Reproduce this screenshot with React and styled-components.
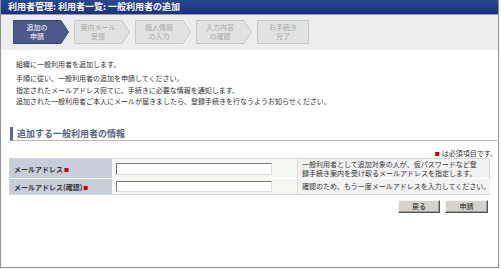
import React from "react";
import styled, { createGlobalStyle } from "styled-components";

const GlobalStyle = createGlobalStyle`
  body {
    margin: 0;
    background: #fff;
    font-family: "Noto Sans CJK JP", "Noto Sans", sans-serif;
  }
`;

const Frame = styled.div`
  width: 499px;
  height: 268px;
  box-sizing: border-box;
  border: 1px solid #8f8f8f;
  border-top: none;
  background: #fff;
  overflow: hidden;
`;

const TitleBar = styled.div`
  height: 14px;
  background: linear-gradient(#2a4794, #1b3479);
  border-bottom: 1px solid #8d9cc4;
  color: #fff;
  font-size: 9px;
  font-weight: bold;
  line-height: 14px;
  padding-left: 7px;
  white-space: nowrap;
`;

const StepBar = styled.div`
  height: 35px;
  box-sizing: border-box;
  background: #ededed;
  padding: 5px 0 0 12px;
  display: flex;
  gap: 5px;
`;

const StepBox = styled.div`
  position: relative;
  width: ${(p) => (p.last ? 52 : 56)}px;
  height: 24px;
  display: flex;
  align-items: center;
  justify-content: center;
  padding-right: ${(p) => (p.last ? 0 : 8)}px;
  box-sizing: border-box;
  color: ${(p) => (p.active ? "#fff" : "#a9a9a9")};
  font-size: 7px;
  line-height: 9px;
  text-align: center;
  svg {
    position: absolute;
    inset: 0;
  }
  span {
    position: relative;
  }
`;

const Content = styled.div`
  padding: 0 1px 0 8px;
`;

const Intro = styled.div`
  margin: 9px 0 0 7px;
  font-size: 7px;
  line-height: 11.5px;
  color: #333;
  white-space: nowrap;
`;

const Para = styled.div`
  margin-top: ${(p) => p.gap || 0}px;
`;

const Heading = styled.div`
  margin: 19.5px 0 0 1px;
  height: 13px;
  border-left: 3px solid #5d6b8e;
  border-bottom: 1px solid #b9b9b9;
  padding-left: 4px;
  font-size: 9px;
  font-weight: bold;
  line-height: 13px;
  color: #56637f;
`;

const Note = styled.div`
  margin-top: 7px;
  text-align: right;
  font-size: 7px;
  line-height: 10px;
  color: #333;
`;

const Dot = styled.span`
  color: #d40000;
  font-size: 5px;
  vertical-align: 1px;
  margin: 0 2px 0 1px;
`;

const Table = styled.div`
  width: 481px;
  box-sizing: border-box;
  border: 1px solid #d6d6d6;
`;

const Row = styled.div`
  display: grid;
  grid-template-columns: 102px 186px 1fr;
  height: ${(p) => p.h}px;
  border-bottom: ${(p) => (p.divider ? "1px solid #fff" : "none")};
`;

const Label = styled.div`
  background: #c8ced9;
  display: flex;
  align-items: center;
  padding-left: 4px;
  font-size: 7px;
  font-weight: bold;
  color: #333;
  white-space: nowrap;
`;

const InputCell = styled.div`
  background: #f6f6f4;
  border-left: 1px solid #fff;
  border-right: 1px solid #dcdcdc;
  display: flex;
  align-items: center;
  padding-left: 3px;
`;

const Field = styled.input`
  width: 156px;
  height: ${(p) => p.h}px;
  box-sizing: border-box;
  border: 1px solid;
  border-color: #7a7a7a #dcdcdc #dcdcdc #7a7a7a;
  background: #fff;
  padding: 0;
  outline: none;
`;

const Desc = styled.div`
  background: #f2f2f2;
  display: flex;
  align-items: center;
  padding-left: 4px;
  font-size: 7px;
  line-height: 8.5px;
  color: #333;
  white-space: nowrap;
`;

const Actions = styled.div`
  display: flex;
  justify-content: flex-end;
  gap: 5px;
  margin: 5px 9px 0 0;
`;

const Button = styled.button`
  width: ${(p) => p.w}px;
  height: 13px;
  box-sizing: border-box;
  padding: 0;
  background: #d6d3ce;
  border: 1px solid;
  border-color: #f4f4f4 #555 #555 #f4f4f4;
  box-shadow: inset -1px -1px 0 #9a9a9a;
  font-family: inherit;
  font-size: 7px;
  line-height: 11px;
  color: #111;
`;

const steps = [
  ["追加の", "申請"],
  ["案内メール", "受信"],
  ["個人情報", "の入力"],
  ["入力内容", "の確認"],
  ["お手続き", "完了"],
];

const Step = ({ lines, active, last }) => {
  const w = last ? 52 : 56;
  const points = last
    ? `0.5,0.5 ${w - 0.5},0.5 ${w - 0.5},23.5 0.5,23.5`
    : `0.5,0.5 48,0.5 55.5,12 48,23.5 0.5,23.5`;
  return (
    <StepBox active={active} last={last}>
      <svg width={w} height="24" viewBox={`0 0 ${w} 24`}>
        <polygon
          points={points}
          fill={active ? "#4c5a8a" : "#e2e2e2"}
          stroke={active ? "#394670" : "#c7c7c7"}
          strokeWidth="1"
        />
      </svg>
      <span>
        {lines[0]}
        <br />
        {lines[1]}
      </span>
    </StepBox>
  );
};

export default function App() {
  return (
    <>
      <GlobalStyle />
      <Frame>
        <TitleBar>利用者管理: 利用者一覧: 一般利用者の追加</TitleBar>
        <StepBar>
          {steps.map((s, i) => (
            <Step key={i} lines={s} active={i === 0} last={i === steps.length - 1} />
          ))}
        </StepBar>
        <Content>
          <Intro>
            <Para>組織に一般利用者を追加します。</Para>
            <Para gap={2.5}>
              手順に従い、一般利用者の追加を申請してください。
              <br />
              指定されたメールアドレス宛てに、手続きに必要な情報を通知します。
              <br />
              追加された一般利用者ご本人にメールが届きましたら、登録手続きを行なうようお知らせください。
            </Para>
          </Intro>
          <Heading>追加する一般利用者の情報</Heading>
          <Note>
            <Dot>■</Dot>は必須項目です。
          </Note>
          <Table>
            <Row h={19} divider>
              <Label>
                メールアドレス<Dot>■</Dot>
              </Label>
              <InputCell>
                <Field h={12} />
              </InputCell>
              <Desc>
                一般利用者として追加対象の人が、仮パスワードなど登
                <br />
                録手続き案内を受け取るメールアドレスを指定します。
              </Desc>
            </Row>
            <Row h={15}>
              <Label>
                メールアドレス(確認)<Dot>■</Dot>
              </Label>
              <InputCell>
                <Field h={11} />
              </InputCell>
              <Desc>確認のため、もう一度メールアドレスを入力してください。</Desc>
            </Row>
          </Table>
          <Actions>
            <Button w={42}>戻る</Button>
            <Button w={43}>申請</Button>
          </Actions>
        </Content>
      </Frame>
    </>
  );
}
